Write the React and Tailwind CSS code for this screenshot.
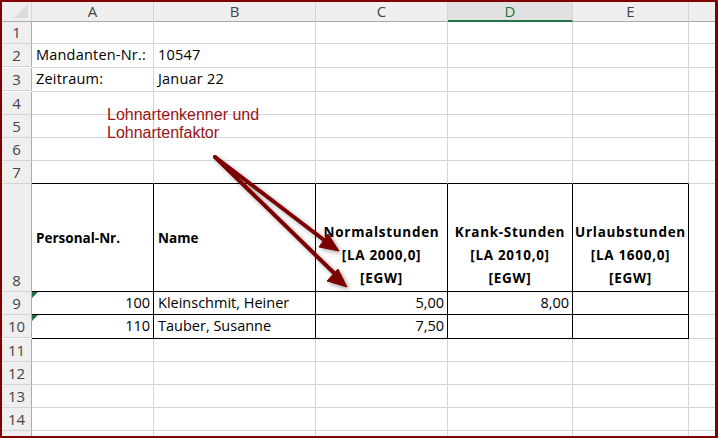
import React from "react";

const cols = ["A", "B", "C", "D", "E"];

// cell content keyed by row number, one entry per column A..E
const rows = [
    { n: 1, h: "h-[22px]" },
    { n: 2, h: "h-[23px]", cells: ["Mandanten-Nr.:", "10547"] },
    { n: 3, h: "h-[23px]", cells: ["Zeitraum:", "Januar 22"] },
    { n: 4, h: "h-[23px]" },
    { n: 5, h: "h-[23px]" },
    { n: 6, h: "h-[23px]" },
    { n: 7, h: "h-[23px]" },
    { n: 8, h: "h-[108px]", header: true },
    { n: 9, h: "h-[23px]", data: ["100", "Kleinschmit, Heiner", "5,00", "8,00", ""] },
    { n: 10, h: "h-[23px]", data: ["110", "Tauber, Susanne", "7,50", "", ""] },
    { n: 11, h: "h-[23px]" },
    { n: 12, h: "h-[23px]" },
    { n: 13, h: "h-[23px]" },
    { n: 14, h: "h-[23px]" },
    { n: 15, h: "h-[23px]" },
];

function RowHeader({ n, h }) {
    return (
        <div className={`${h} flex items-end justify-center pb-[1px] bg-[#efefef] border-r border-b border-r-[#ababab] border-b-[#d4d4d4] text-[15px] leading-[20px] text-[#444]`}>
            {n}
        </div>
    );
}

function HeaderCell({ lines, align = "center" }) {
    if (align === "left") {
        return (
            <div className="h-full flex flex-col items-start justify-center pl-[4px] pt-[1px] border-r border-b border-black font-bold text-[13.5px] leading-[22px] text-black">
                {lines.map((l) => (
                    <span key={l}>{l}</span>
                ))}
            </div>
        );
    }
    return (
        <div className="h-full flex flex-col items-center justify-end pb-[1px] border-r border-b border-black font-bold text-[13.5px] leading-[23px] tracking-[0.7px] text-black">
            {lines.map((l) => (
                <span key={l}>{l}</span>
            ))}
        </div>
    );
}

function GridRow({ row }) {
    const { n, h } = row;

    if (row.header) {
        return (
            <>
                <RowHeader n={n} h={h} />
                <HeaderCell lines={["Personal-Nr."]} align="left" />
                <HeaderCell lines={["Name"]} align="left" />
                <HeaderCell lines={["Normalstunden", "[LA 2000,0]", "[EGW]"]} />
                <HeaderCell lines={["Krank-Stunden", "[LA 2010,0]", "[EGW]"]} />
                <HeaderCell lines={["Urlaubstunden", "[LA 1600,0]", "[EGW]"]} />
                <div className="border-b border-[#d4d4d4]" />
            </>
        );
    }

    if (row.data) {
        const d = row.data;
        return (
            <>
                <RowHeader n={n} h={h} />
                <div className="relative flex items-end justify-end pr-[3px] pb-[1px] border-r border-b border-black text-[14.5px]">
                    <span className="absolute left-0 top-0 w-0 h-0 border-t-[6px] border-r-[6px] border-t-[#1e7145] border-r-transparent" />
                    {d[0]}
                </div>
                <div className="flex items-end pl-[4px] pb-[1px] border-r border-b border-black text-[14.5px]">{d[1]}</div>
                <div className="flex items-end justify-end pr-[3px] pb-[1px] border-r border-b border-black text-[14.5px]">{d[2]}</div>
                <div className="flex items-end justify-end pr-[3px] pb-[1px] border-r border-b border-black text-[14.5px]">{d[3]}</div>
                <div className="flex items-end justify-end pr-[3px] pb-[1px] border-r border-b border-black text-[14.5px]">{d[4]}</div>
                <div className="border-b border-[#d4d4d4]" />
            </>
        );
    }

    const c = row.cells || [];
    // row 7 carries the top line of the table
    const bottom = n === 7 ? "border-b-black" : "border-b-[#d4d4d4]";
    return (
        <>
            <RowHeader n={n} h={h} />
            {cols.map((col, i) => (
                <div key={col} className={`flex items-end pl-[4px] pb-[1px] border-r border-b border-r-[#d4d4d4] ${bottom} text-[14.5px] tracking-[0.2px] whitespace-nowrap`}>
                    {c[i] || ""}
                </div>
            ))}
            <div className="border-b border-[#d4d4d4]" />
        </>
    );
}

function Arrows() {
    return (
        <svg className="absolute left-0 top-0 pointer-events-none" width="718" height="438" viewBox="0 0 718 438">
            <defs>
                <filter id="shadow" x="-20%" y="-20%" width="140%" height="140%">
                    <feDropShadow dx="2" dy="2" stdDeviation="2" floodColor="#000" floodOpacity="0.35" />
                </filter>
            </defs>
            <g filter="url(#shadow)" fill="#7b0000" stroke="#7b0000">
                <line x1="213" y1="155" x2="322" y2="238" strokeWidth="4" strokeLinecap="round" />
                <polygon points="337,249 317,245 326,232" strokeWidth="1" />
                <line x1="213" y1="155" x2="332" y2="271" strokeWidth="4" strokeLinecap="round" />
                <polygon points="345,285 325,279 336,267" strokeWidth="1" />
            </g>
        </svg>
    );
}

export default function App() {
    return (
        <div className="relative w-[718px] h-[438px] overflow-hidden bg-white border-t-2 border-l-2 border-b-2 border-r-[3px] border-[#7f0000] font-['Open_Sans',sans-serif] text-black">
            <div className="grid grid-cols-[30px_122px_162px_132px_125px_116px_1fr]">
                {/* corner + column letters */}
                <div className="h-[20px] relative bg-[#efefef] border-r border-b border-r-[#d4d4d4] border-b-[#ababab]">
                    <span className="absolute right-[3px] bottom-[3px] w-0 h-0 border-b-[14px] border-l-[14px] border-b-[#dcdcdc] border-l-transparent" />
                </div>
                {cols.map((col) =>
                    col === "D" ? (
                        <div key={col} className="h-[20px] flex items-center justify-center bg-[#e1e1e1] border-r border-r-[#d4d4d4] border-b-2 border-b-[#217346] text-[15px] text-[#217346]">
                            {col}
                        </div>
                    ) : (
                        <div key={col} className="h-[20px] flex items-center justify-center bg-[#efefef] border-r border-b border-r-[#d4d4d4] border-b-[#ababab] text-[15px] text-[#444]">
                            {col}
                        </div>
                    )
                )}
                <div className="h-[20px] bg-[#efefef] border-b border-[#ababab]" />

                {rows.map((row) => (
                    <GridRow key={row.n} row={row} />
                ))}
            </div>

            {/* annotation */}
            <div className="absolute left-[105px] top-[104px] text-[16px] leading-[18px] text-[#9a1418] font-['Liberation_Sans',Arial,sans-serif]">
                <div>Lohnartenkenner und</div>
                <div>Lohnartenfaktor</div>
            </div>
            <Arrows />
        </div>
    );
}
